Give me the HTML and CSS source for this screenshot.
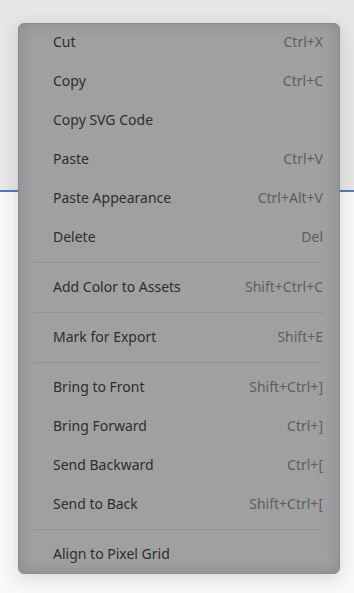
FILE: index.html
```html
<!DOCTYPE html>
<html lang="en">
<head>
  <meta charset="UTF-8" />
  <title>Context Menu</title>
  <link rel="stylesheet" href="styles.css">
</head>
<body>
  <div id="page">
    <div id="toolbar-area"></div>
    <div id="rule"></div>
    <div id="canvas-area"></div>
  </div>

  <div id="context-menu">
    <div class="menu-item"><span class="label">Cut</span><span class="shortcut">Ctrl+X</span></div>
    <div class="menu-item"><span class="label">Copy</span><span class="shortcut">Ctrl+C</span></div>
    <div class="menu-item"><span class="label">Copy SVG Code</span></div>
    <div class="menu-item"><span class="label">Paste</span><span class="shortcut">Ctrl+V</span></div>
    <div class="menu-item"><span class="label">Paste Appearance</span><span class="shortcut">Ctrl+Alt+V</span></div>
    <div class="menu-item"><span class="label">Delete</span><span class="shortcut">Del</span></div>
    <div class="separator"></div>
    <div class="menu-item"><span class="label">Add Color to Assets</span><span class="shortcut">Shift+Ctrl+C</span></div>
    <div class="separator"></div>
    <div class="menu-item"><span class="label">Mark for Export</span><span class="shortcut">Shift+E</span></div>
    <div class="separator"></div>
    <div class="menu-item"><span class="label">Bring to Front</span><span class="shortcut">Shift+Ctrl+]</span></div>
    <div class="menu-item"><span class="label">Bring Forward</span><span class="shortcut">Ctrl+]</span></div>
    <div class="menu-item"><span class="label">Send Backward</span><span class="shortcut">Ctrl+[</span></div>
    <div class="menu-item"><span class="label">Send to Back</span><span class="shortcut">Shift+Ctrl+[</span></div>
    <div class="separator"></div>
    <div class="menu-item"><span class="label">Align to Pixel Grid</span></div>
  </div>
</body>
</html>
```

FILE: styles.css
```css
body {
  margin: 0;
  padding: 0;
  font-family: "Noto Sans", "Open Sans", sans-serif;
  background-color: #f7f7f7;
  height: 100vh;
  overflow: hidden;
}

#page {
  display: flex;
  flex-direction: column;
  height: 100%;
}

#toolbar-area {
  height: 190px;
  background-color: #e6e6e6;
}

#rule {
  height: 2px;
  background-color: #3d82d4;
}

#canvas-area {
  flex: 1;
  background-color: #f8f8f8;
}

#context-menu {
  position: absolute;
  left: 18px;
  top: 23px;
  width: 320px;
  background-color: #a0a0a0;
  border: 1px solid #8c8c8c;
  border-radius: 6px;
  box-shadow: inset 0 0 16px rgba(0, 0, 0, 0.14), 0 4px 18px rgba(0, 0, 0, 0.14);
  display: flex;
  flex-direction: column;
}

.menu-item {
  height: 39px;
  box-sizing: border-box;
  display: flex;
  align-items: center;
  justify-content: space-between;
  padding: 0 16px 2px 34px;
  font-size: 14px;
}

.menu-item:first-child {
  margin-top: -1px;
}

.menu-item:last-child {
  margin-bottom: -1px;
}

.label {
  color: #2e2e2e;
}

.shortcut {
  color: #5e5e5e;
}

.separator {
  height: 1px;
  margin: 5px 15px 5px 13px;
  background-color: #949494;
}
```
